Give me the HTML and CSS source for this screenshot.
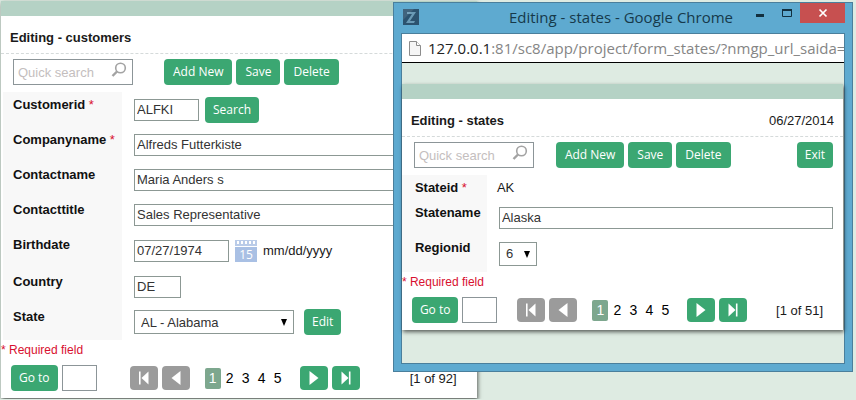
FILE: index.html
```html
<!DOCTYPE html>
<html lang="en">
<head>
<meta charset="utf-8">
<title>Editing - customers</title>
<link rel="stylesheet" href="styles.css">
</head>
<body>
<svg class="defs" aria-hidden="true">
  <symbol id="lens" viewBox="0 0 16 16"><circle cx="9.5" cy="6" r="4.8" fill="none" stroke="#a3a3a3" stroke-width="1.6"/><path d="M6 9.5 1.5 14" stroke="#a3a3a3" stroke-width="2.4"/></symbol>
  <symbol id="first" viewBox="0 0 28 24"><path d="M9.8 5.500V18.500" stroke="#fff" stroke-width="1.6"/><path d="M18.500 5.500v13L11.500 12z" fill="#fff"/></symbol>
  <symbol id="prev" viewBox="0 0 28 24"><path d="M18.500 5v14L9.500 12z" fill="#fff"/></symbol>
  <symbol id="next" viewBox="0 0 28 24"><path d="M9.500 5v14l9-7z" fill="#fff"/></symbol>
  <symbol id="last" viewBox="0 0 28 24"><path d="M9.500 5.500v13L16.500 12z" fill="#fff"/><path d="M17.700 5.500V18.500" stroke="#fff" stroke-width="1.600"/></symbol>
  <symbol id="down" viewBox="0 0 8 8"><path d="M1 1h6L4 8z" fill="#000"/></symbol>
</svg>

<main class="card card-main">
  <div class="band"></div>
  <header class="head"><h1>Editing - customers</h1></header>
  <div class="toolbar">
    <div class="search"><input type="text" aria-label="Quick search" placeholder="Quick search"><svg><use href="#lens"/></svg></div>
    <button class="btn">Add New</button><button class="btn">Save</button><button class="btn">Delete</button>
  </div>
  <form class="fields">
    <div class="row"><label class="name" for="cid">Customerid <i>*</i></label><div class="value"><input class="box w-id" id="cid" value="ALFKI"><button type="button" class="btn">Search</button></div></div>
    <div class="row"><label class="name" for="company">Companyname <i>*</i></label><div class="value"><input class="box w-full" id="company" value="Alfreds Futterkiste"></div></div>
    <div class="row"><label class="name" for="contact">Contactname</label><div class="value"><input class="box w-full" id="contact" value="Maria Anders s"></div></div>
    <div class="row"><label class="name" for="ctitle">Contacttitle</label><div class="value"><input class="box w-full" id="ctitle" value="Sales Representative"></div></div>
    <div class="row tall"><label class="name" for="birth">Birthdate</label><div class="value"><input class="box w-date" id="birth" value="07/27/1974">
      <button type="button" class="cal" aria-label="Open calendar"><svg viewBox="0 0 22 22"><path d="M0 0h22v6H0z" fill="#b9cbe8"/><path d="M0 7h22v15H0z" fill="#a9c0e4"/><path d="M2 1h2v3H2zM6 1h2v3H6zM10 1h2v3h-2zM14 1h2v3h-2zM18 1h2v3h-2z" fill="#fff"/><text x="11" y="19" text-anchor="middle">15</text></svg></button>
      <span>mm/dd/yyyy</span></div></div>
    <div class="row"><label class="name" for="country">Country</label><div class="value"><input class="box w-short" id="country" value="DE"></div></div>
    <div class="row last"><label class="name" for="state">State</label><div class="value"><span class="pick w-state"><select id="state"><option>AL - Alabama</option></select><svg><use href="#down"/></svg></span><button type="button" class="btn edit">Edit</button></div></div>
  </form>
  <p class="required">* Required field</p>
  <footer class="foot">
    <button class="btn">Go to</button><input class="goto" aria-label="Record number">
    <nav class="pager" aria-label="Customer records">
      <button class="nav off" aria-label="First"><svg><use href="#first"/></svg></button><button class="nav off" aria-label="Previous"><svg><use href="#prev"/></svg></button>
      <span class="pages"><a class="on" href="#">1</a><a href="#">2</a><a href="#">3</a><a href="#">4</a><a href="#">5</a></span>
      <button class="nav" aria-label="Next"><svg><use href="#next"/></svg></button><button class="nav" aria-label="Last"><svg><use href="#last"/></svg></button>
    </nav>
    <span class="count">[1 of 92]</span>
  </footer>
</main>

<section class="window" aria-label="Editing - states">
  <div class="titlebar">
    <svg class="favicon" viewBox="0 0 16 16"><path d="M0 0h16v16H0z" fill="#2c536f"/><path d="M4 3h9L7 12h5l-1 2H3l6-9H4z" fill="#6a9ab5"/><path d="M0 11 11 0H0z" fill="#fff" opacity=".1"/></svg>
    <span class="caption">Editing - states - Google Chrome</span>
    <div class="controls">
      <button aria-label="Minimize"><svg viewBox="0 0 10 10"><path d="M1 7.500h8" stroke="#12303f" stroke-width="3"/></svg></button>
      <button aria-label="Maximize"><svg viewBox="0 0 10 10"><path d="M.5 1.500h9v7h-9z" fill="none" stroke="#12303f"/><path d="M0 2h10" stroke="#12303f" stroke-width="2"/></svg></button>
      <button class="close" aria-label="Close"><svg viewBox="0 0 10 10"><path d="m1.500 1.500 7 7m0-7-7 7" stroke="#fff" stroke-width="1.700"/></svg></button>
    </div>
  </div>
  <div class="view">
    <div class="address">
      <svg viewBox="0 0 12 15"><path d="M.5.5h7l4 4v10H.5z" fill="#f6f6f6" stroke="#8c8c8c"/><path d="M7.500.5v4h4" fill="#fff" stroke="#8c8c8c"/></svg>
      <span class="url"><b>127.0.0.1</b>:81/sc8/app/project/form_states/?nmgp_url_saida=</span>
    </div>
    <div class="card">
      <div class="band"></div>
      <header class="head"><h2>Editing - states</h2><time>06/27/2014</time></header>
      <div class="toolbar">
        <div class="search"><input type="text" aria-label="Quick search" placeholder="Quick search"><svg><use href="#lens"/></svg></div>
        <button class="btn">Add New</button><button class="btn">Save</button><button class="btn">Delete</button><button class="btn exit">Exit</button>
      </div>
      <form class="fields">
        <div class="row short"><span class="name">Stateid <i>*</i></span><div class="value plain">AK</div></div>
        <div class="row"><label class="name" for="sname">Statename</label><div class="value"><input class="box w-full" id="sname" value="Alaska"></div></div>
        <div class="row last"><label class="name" for="region">Regionid</label><div class="value"><span class="pick w-region"><select id="region"><option>6</option></select><svg><use href="#down"/></svg></span></div></div>
      </form>
      <p class="required">* Required field</p>
      <footer class="foot">
        <button class="btn">Go to</button><input class="goto" aria-label="Record number">
        <nav class="pager" aria-label="State records">
          <button class="nav off" aria-label="First"><svg><use href="#first"/></svg></button><button class="nav off" aria-label="Previous"><svg><use href="#prev"/></svg></button>
          <span class="pages"><a class="on" href="#">1</a><a href="#">2</a><a href="#">3</a><a href="#">4</a><a href="#">5</a></span>
          <button class="nav" aria-label="Next"><svg><use href="#next"/></svg></button><button class="nav" aria-label="Last"><svg><use href="#last"/></svg></button>
        </nav>
        <span class="count">[1 of 51]</span>
      </footer>
    </div>
  </div>
</section>
</body>
</html>
```
FILE: styles.css
```css
* { box-sizing: border-box; }
body {
  margin: 0;
  padding: 1px;
  background: #deebe2;
  color: #1a1a1a;
  font: 13px/15px "Liberation Sans", Arial, sans-serif;
  overflow: hidden;
}
input, select, button { font: inherit; color: inherit; margin: 0; }
button { border: 0; padding: 0; }
.defs { position: absolute; width: 0; height: 0; }

.card { background: #fff; box-shadow: 1px 2px 4px rgba(0, 0, 0, .6); }
.card-main { width: 55.7%; }
.band { height: 15px; background: #b5d2c5; }
.head {
  display: flex;
  align-items: center;
  justify-content: space-between;
  height: 38px;
  padding: 6px 9px 0 9px;
  border-bottom: 1px dashed #d5dada;
}
.head h1, .head h2 { margin: 0; font-size: 13px; font-weight: bold; }
.toolbar { display: flex; gap: 4px; padding: 5px 10px 7px 12px; }
.search { position: relative; width: 120px; margin-right: 27px; }
.search input { width: 100%; height: 26px; padding: 0 26px 0 4px; border: 1px solid #8c9598; background: #fff; }
.search input::placeholder { color: #c4bebe; opacity: 1; }
.search svg { position: absolute; right: 6px; top: 3px; width: 16px; height: 16px; }
.btn {
  min-width: 36px;
  height: 26px;
  padding: 0 8px;
  border-radius: 4px;
  background: #3ba772;
  color: #fff;
  font: 12px/26px "Open Sans", sans-serif;
  white-space: nowrap;
}
.toolbar .btn { padding: 0 9px; }
.toolbar .exit { margin-left: auto; padding: 0 8px; }

.fields { margin-left: 2px; }
.row { display: grid; grid-template-columns: 119px 1fr; min-height: 35px; }
.row.tall { min-height: 37px; }
.row.last { min-height: 36px; }
.row.short { min-height: 25px; }
.name { padding: 5px 0 0 10px; background: #f8f8f8; font-weight: bold; color: #111; white-space: nowrap; }
.name i { color: #d8102f; font-style: normal; font-weight: normal; }
.value { display: flex; align-items: center; gap: 6px; padding: 0 10px 0 12px; }
.plain { padding-left: 10px; }
.box { height: 22px; padding: 0 2px; border: 1px solid #8c9894; background: #fff; color: #333; }
.w-id { width: 65px; }
.w-full { width: 100%; }
.w-date { width: 95px; }
.w-short { width: 47px; }
.w-state { width: 160px; }
.w-region { width: 38px; }
.edit { margin-left: 4px; }
.cal { width: 22px; height: 22px; background: none; }
.cal svg { display: block; }
.cal text { fill: #fff; font: 12px "Open Sans", sans-serif; }
.pick { position: relative; height: 24px; }
.pick select {
  width: 100%;
  height: 100%;
  padding: 0 6px;
  border: 1px solid #8c9894;
  border-radius: 0;
  background: #fff;
  color: #333;
  appearance: none;
}
.pick svg { position: absolute; right: 6px; top: 8px; width: 8px; height: 8px; pointer-events: none; }

.required { margin: 0; padding: 3px 0 7px; color: #d8102f; font-size: 12px; }
.foot { display: flex; align-items: center; padding: 0 20px 7px 10px; }
.goto { width: 35px; height: 26px; margin-left: 4px; border: 1px solid #8c9598; background: #fff; }
.pager { display: flex; align-items: center; gap: 4px; margin-left: 33px; }
.nav { width: 28px; height: 24px; border-radius: 4px; background: #3ba772; }
.nav.off { background: #9b9b9b; }
.nav svg { display: block; width: 28px; height: 24px; }
.pages { display: flex; margin: 0 10px 0 11px; }
.pages a { width: 16px; color: #000; font-size: 14px; line-height: 21px; text-align: center; text-decoration: none; }
.pages .on { margin-right: 1px; border-radius: 2px; background: #7da78e; color: #fff; }
.count { margin-left: auto; white-space: nowrap; }

.window {
  position: absolute;
  top: 2px;
  left: 45.9%;
  right: 3px;
  padding: 0 7px 7px;
  border: 1px solid #4a7f9c;
  background: #5eaad0;
}
.titlebar { display: flex; align-items: flex-start; height: 30px; }
.favicon { width: 16px; height: 16px; margin: 6px 0 0 2px; }
.caption { flex: 1; padding: 4px 0 0 2px; color: #16394a; font: 15px/21px "Open Sans", sans-serif; text-align: right; white-space: nowrap; }
.controls { display: flex; margin-left: 13px; }
.controls button { display: grid; place-items: center; width: 27px; height: 20px; background: none; }
.controls .close { width: 45px; background: #c75050; }
.controls svg { width: 10px; height: 10px; }
.view { padding: 0 1px 33px 0; border: 1px solid #4a7f9c; background: #deebe2; }
.address {
  display: flex;
  align-items: center;
  height: 29px;
  margin-right: -1px;
  padding-left: 7px;
  border-bottom: 1px solid #000;
  background: #fff;
  overflow: hidden;
}
.address svg { flex: none; width: 12px; height: 15px; margin-right: 7px; }
.url { color: #858585; font: 15px/24px "Open Sans", sans-serif; white-space: nowrap; }
.url b { color: #222; font-weight: normal; }
.view .card { margin-top: 21px; }
.view .search { margin-right: 18px; }
.view .fields { margin-left: 0; }
.view .row { grid-template-columns: 85px 1fr; }
.view .name { padding-left: 13px; }
.view .row.last { min-height: 37px; }
.view .pager { margin-left: 20px; }
```
